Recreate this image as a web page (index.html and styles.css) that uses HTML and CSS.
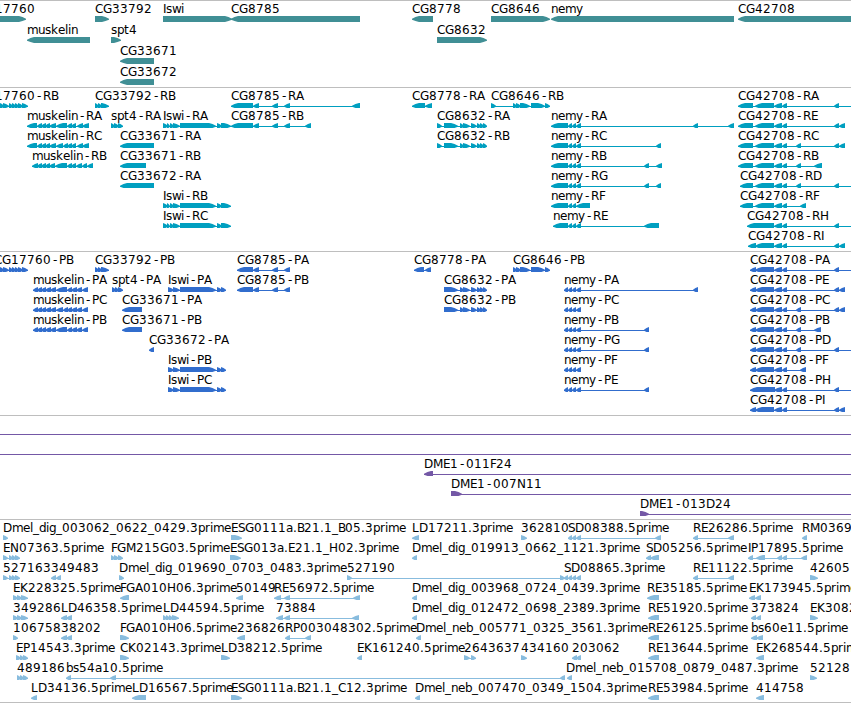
FILE: index.html
```
<!DOCTYPE html>
<html lang="en">
<head>
    <meta charset="UTF-8">
    <meta name="viewport" content="width=device-width, initial-scale=1.0">
    <title>Genome Browser</title>
    <link rel="stylesheet" href="styles.css">
</head>
<body>
    <div class="browser">
        <div class="track genes" id="genes"></div>
        <div class="track transcripts" id="transcripts"></div>
        <div class="track proteins" id="proteins"></div>
        <div class="track clones" id="clones"></div>
        <div class="track ests" id="ests"></div>
    </div>
    <script src="script.js"></script>
</body>
</html>
```
FILE: styles.css
```
body {
    margin: 0;
    background-color: #fff;
    font-family: "DejaVu Sans", sans-serif;
    font-size: 12px;
    color: #000;
}
.browser {
    width: 100%;
    height: 703px;
    box-sizing: border-box;
    overflow: hidden;
    border-bottom: 1px solid #bebebe;
}
.track {
    border-top: 1px solid #bebebe;
    padding-bottom: 3px;
}
.row {
    display: block;
    width: 100%;
    height: 20px;
    fill: currentColor;
}
.genes {
    padding-bottom: 2px;
    color: #408f95;
}
.genes .row {
    height: 21px;
}
.transcripts {
    color: #009fc0;
}
.proteins {
    color: #316dcd;
}
.clones {
    color: #7458a6;
}
.ests {
    padding-bottom: 2px;
    color: #88bcde;
}
.label {
    fill: #000;
}
```
FILE: script.js
```
// feature: [label, strand, exons, label x (default: first exon)]
// an exon written as a single number only extends the connecting line
const cg = '755-774 774-782 782-787 ';
const cgR = '738-753 ' + cg;
const nemy = '568-572 572-576 576-581 ';
const cg8632 = '444-458 460-464 463-470 471-477 477-481 480-484 483-487';
const iswiR = '163-168 167-170 170-174 173-180 180-216 217-222 221-231';
const iswiP = '168-174 173-180 180-216 217-222 221-226';
const cg17760 = '-6-1 0-4 3-9 9-13 12-16 15-19 18-23 22-28';

const data = {
    genes: [
        [['CG17760', '>', '-60-26', -22], ['CG33792', '>', '95-109'], ['Iswi', '>', '163-232'], ['CG8785', '<', '231-360'],
         ['CG8778', '<', '412-433'], ['CG8646', '>', '491-550'], ['nemy', '<', '551-734'], ['CG42708', '<', '738-860']],
        [['muskelin', '<', '27-90'], ['spt4', '>', '111-121'], ['CG8632', '>', '437-487']],
        [['CG33671', '<', '120-154']],
        [['CG33672', '<', '120-154']]
    ],
    transcripts: [
        [['CG17760-RB', '>', cg17760, -22], ['CG33792-RB', '>', '95-99 98-102 101-109'],
         ['CG8785-RA', '<', '231-253 253-259 272-278 284-290 352-360'], ['CG8778-RA', '<', '412-425 425-432'],
         ['CG8646-RB', '>', '491-496 513-517 516-521 520-530 531-545 545-550'], ['CG42708-RA', '<', cgR + '834-839 860']],
        [['muskelin-RA', '<', '27-37 37-42 41-46 45-50 49-56 56-67 67-72 71-76 77-83 82-89'], ['spt4-RA', '>', '111-115 114-119 118-123'],
         ['Iswi-RA', '>', iswiR], ['CG8785-RB', '<', '231-253 253-259 272-278 284-290 305-311'],
         ['CG8632-RA', '>', '437-442 ' + cg8632], ['nemy-RA', '<', '551-568 ' + nemy + '693-698 728-734'],
         ['CG42708-RE', '<', cgR + '834-839 839-845']],
        [['muskelin-RC', '<', '27-37 37-42 41-46 45-50 49-56 56-63 63-68 67-72 71-76 77-83 82-89'], ['CG33671-RA', '<', '120-154'],
         ['CG8632-RB', '>', '437-442 ' + cg8632], ['nemy-RC', '<', '551-568 ' + nemy + '656-661'],
         ['CG42708-RC', '<', cgR + '796-801 834-839 839-845']],
        [['muskelin-RB', '<', '32-38 37-42 41-46 45-50 49-55 55-67 67-72 71-76 76-82 82-87 87-93'], ['CG33671-RB', '<', '120-146'],
         ['nemy-RB', '<', '551-568 ' + nemy + '644-649 656-662'], ['CG42708-RB', '<', cgR + '796-801 814-822']],
        [['CG33672-RA', '<', '120-154'], ['nemy-RG', '<', '551-568 ' + nemy + '644-649 656-661'],
         ['CG42708-RD', '<', '740-753 ' + cg + '796-801 834-839 860']],
        [['Iswi-RB', '>', iswiR], ['nemy-RF', '<', '551-568 568-572 572-576 576-590'], ['CG42708-RF', '<', '740-753 ' + cg + '800-806']],
        [['Iswi-RC', '>', iswiR], ['nemy-RE', '<', '553-568 ' + nemy + '644-659'], ['CG42708-RH', '<', '747-774 774-782 782-787 834-839 860']],
        [['CG42708-RI', '<', '748-756 ' + cg + '834-839 839-845']]
    ],
    proteins: [
        [['CG17760-PB', '>', cg17760, -6], ['CG33792-PB', '>', '95-99 98-102 101-109'], ['CG8785-PA', '<', '237-253 253-259 272-278 284-290'],
         ['CG8778-PA', '<', '414-424 425-431'], ['CG8646-PB', '>', '513-517 516-521 520-530 531-545 545-550'],
         ['CG42708-PA', '<', '750-756 ' + cg + '834-839 860']],
        [['muskelin-PA', '<', '33-38 37-42 41-46 45-51 50-56 56-67 67-72 71-77 76-82 82-88'], ['spt4-PA', '>', '112-116 115-119 118-123'],
         ['Iswi-PA', '>', iswiP], ['CG8785-PB', '<', '237-253 253-259 272-278 284-290'], ['CG8632-PA', '>', cg8632],
         ['nemy-PA', '<', '564-568 ' + nemy + '693-698'], ['CG42708-PE', '<', '750-756 ' + cg + '834-839 839-845']],
        [['muskelin-PC', '<', '33-38 37-42 41-46 45-51 50-56 56-63 63-68 67-72 71-77 76-82 82-88'], ['CG33671-PA', '<', '122-142'],
         ['CG8632-PB', '>', cg8632], ['nemy-PC', '<', '564-568 ' + nemy], ['CG42708-PC', '<', '750-756 ' + cg + '796-801 834-839 839-845']],
        [['muskelin-PB', '<', '33-38 37-42 41-46 45-51 50-56 56-67 67-72 71-77 76-82 82-88'], ['CG33671-PB', '<', '122-142'],
         ['nemy-PB', '<', '564-568 ' + nemy + '644-649'], ['CG42708-PB', '<', '750-756 ' + cg + '796-801 814-821']],
        [['CG33672-PA', '<', '149-154'], ['nemy-PG', '<', '564-568 ' + nemy + '644-649'],
         ['CG42708-PD', '<', '750-756 ' + cg + '796-801 834-839 860']],
        [['Iswi-PB', '>', iswiP], ['nemy-PF', '<', '564-568 ' + nemy], ['CG42708-PF', '<', '750-756 ' + cg + '800-806']],
        [['Iswi-PC', '>', iswiP], ['nemy-PE', '<', '564-568 ' + nemy + '644-649'], ['CG42708-PH', '<', '750-775 774-782 782-787 834-839 860']],
        [['CG42708-PI', '<', '750-756 ' + cg + '834-839 839-845']]
    ],
    clones: [
        [['', '>', '-10 860']],
        [['', '>', '-10 860']],
        [['DME1-011F24', '<', '424-433 860']],
        [['DME1-007N11', '>', '451-462 860']],
        [['DME1-013D24', '>', '640-649 860']]
    ],
    ests: [
        [['Dmel_dig_003062_0622_0429.3prime', '>', '3-8'], ['ESG0111a.B21.1_B05.3prime', '>', '231-242'], ['LD17211.3prime', '<', '412-419'],
         ['362810', '>', '521-527'], ['SD08388.5prime', '<', nemy + '655-661'], ['RE26286.5prime', '<', '693-698 728-734'],
         ['RM03698.5prime', '<', '802-807']],
        [['EN07363.5prime', '>', '3-8 9-13 12-16 15-20'], ['FGM215G03.5prime', '>', '111-115 114-119 118-123'],
         ['ESG013a.E21.1_H02.3prime', '>', '230-241'], ['Dmel_dig_019913_0662_1121.3prime', '<', '412-417'],
         ['SD05256.5prime', '<', '646-651 650-659'], ['IP17895.5prime', '<', '748-753 756-765 777-782 782-787 801-807']],
        [['527163', '>', '3-8 9-13 12-16 15-20'], ['349483', '<', '51-56 56-61'], ['Dmel_dig_019690_0703_0483.3prime', '>', '119-124'],
         ['527190', '>', '347-352 560-565'], ['SD08865.3prime', '<', '564-568 ' + nemy], ['RE11122.5prime', '<', '693-698 728-734'],
         ['42605', '>', '810-818']],
        [['EK228325.5prime', '>', '13-18 17-22 21-28'], ['FGA010H06.3prime', '<', '120-129'], ['50149', '<', '236-243'],
         ['RE56972.5prime', '<', '274-281 284-290 353-360'], ['Dmel_dig_003968_0724_0439.3prime', '<', '412-417'],
         ['RE35185.5prime', '<', '647-659'], ['EK173945.5prime', '<', '749-755 755-761']],
        [['349286', '>', '13-18 17-22 21-28'], ['LD46358.5prime', '<', '61-67 66-72'], ['LD44594.5prime', '>', '163-167 166-170 169-173 172-179'],
         ['73884', '<', '276-283 284-290 352-359'], ['Dmel_dig_012472_0698_2389.3prime', '<', '412-417'],
         ['RE51920.5prime', '<', '648-659'], ['373824', '<', '751-756 756-761'], ['EK308221.5prime', '>', '810-818']],
        [['106758', '>', '13-18'], ['38202', '<', '61-67 66-72'], ['FGA010H06.5prime', '>', '120-129'], ['236826', '<', '237-245'],
         ['RP003048302.5prime', '<', '285-290 305-311'], ['Dmel_neb_005771_0325_3561.3prime', '<', '416-421'],
         ['RE26125.5prime', '<', '648-659'], ['bs60e11.5prime', '<', '751-757 756-763']],
        [['EP14543.3prime', '>', '16-21 20-24 23-28'], ['CK02143.3prime', '>', '120-129'], ['LD38212.5prime', '>', '221-230'],
         ['EK161240.5prime', '<', '357-362'], ['2643637', '>', '464-470 471-476'], ['434160', '>', '521-527'],
         ['203062', '<', '572-577 576-581'], ['RE13644.5prime', '<', '648-659'], ['EK268544.5prime', '<', '756-764']],
        [['489186', '>', '17-21 20-24 23-28'], ['bs54a10.5prime', '<', '66-71 110-116 560-565'],
         ['Dmel_neb_015708_0879_0487.3prime', '<', '567-572', 566], ['52128', '>', '810-817']],
        [['LD34136.5prime', '<', '31-37'], ['LD16567.5prime', '<', '132-146'], ['ESG0111a.B21.1_C12.3prime', '>', '231-242'],
         ['Dmel_neb_007470_0349_1504.3prime', '<', '415-420'], ['RE53984.5prime', '<', '648-659'], ['414758', '<', '756-764']]
    ]
};

// whole-pixel letter advances, everything else is 8px
const advance = {
    D: 9, G: 9, H: 9, N: 9, M: 10, E: 7, B: 7, P: 7, L: 7, S: 7, F: 6, I: 3,
    m: 11, u: 7, s: 6, k: 7, e: 7, l: 3, i: 3, n: 7, y: 7, w: 9, p: 7, t: 5,
    r: 5, d: 7, g: 7, a: 7, b: 7, _: 6, '.': 4
};

function letterPositions(text, x) {
    return [...text].map(c => {
        // the hyphen sits in the middle of its cell
        const pos = c === '-' ? x + 2 : x;
        x += advance[c] || 8;
        return pos;
    }).join(' ');
}

// box with a pointed end on the strand side
function arrow(a, b, strand) {
    const head = Math.min(b - a, 7);
    const mid = head / 2;
    if (strand === '<') {
        return `<polygon points="${a},17.7 ${a + mid},16 ${a + head},15 ${b},15 ${b},21 ${a + head},21 ${a + mid},20 ${a},18.7"/>`;
    }
    return `<polygon points="${a},15 ${b - head},15 ${b - mid},16 ${b},17.7 ${b},18.7 ${b - mid},20 ${b - head},21 ${a},21"/>`;
}

function drawRow(features) {
    let labels = '';
    let shapes = '';
    features.forEach(([label, strand, exons, labelX]) => {
        const parts = exons.trim().split(' ').map(e => e.match(/^(-?\d+)(?:-(\d+))?$/));
        const start = Number(parts[0][1]);
        const last = parts[parts.length - 1];
        const end = Number(last[2] || last[1]);
        if (parts.length > 1) {
            shapes += `<rect x="${start}" y="18" width="${end - start}" height="1"/>`;
        }
        parts.forEach(p => {
            if (p[2]) shapes += arrow(Number(p[1]), Number(p[2]), strand);
        });
        if (label) {
            labels += `<text class="label" y="12" x="${letterPositions(label, labelX ?? start)}">${label}</text>`;
        }
    });
    return `<svg class="row">${shapes}${labels}</svg>`;
}

for (const id in data) {
    document.getElementById(id).innerHTML = data[id].map(drawRow).join('');
}
```
